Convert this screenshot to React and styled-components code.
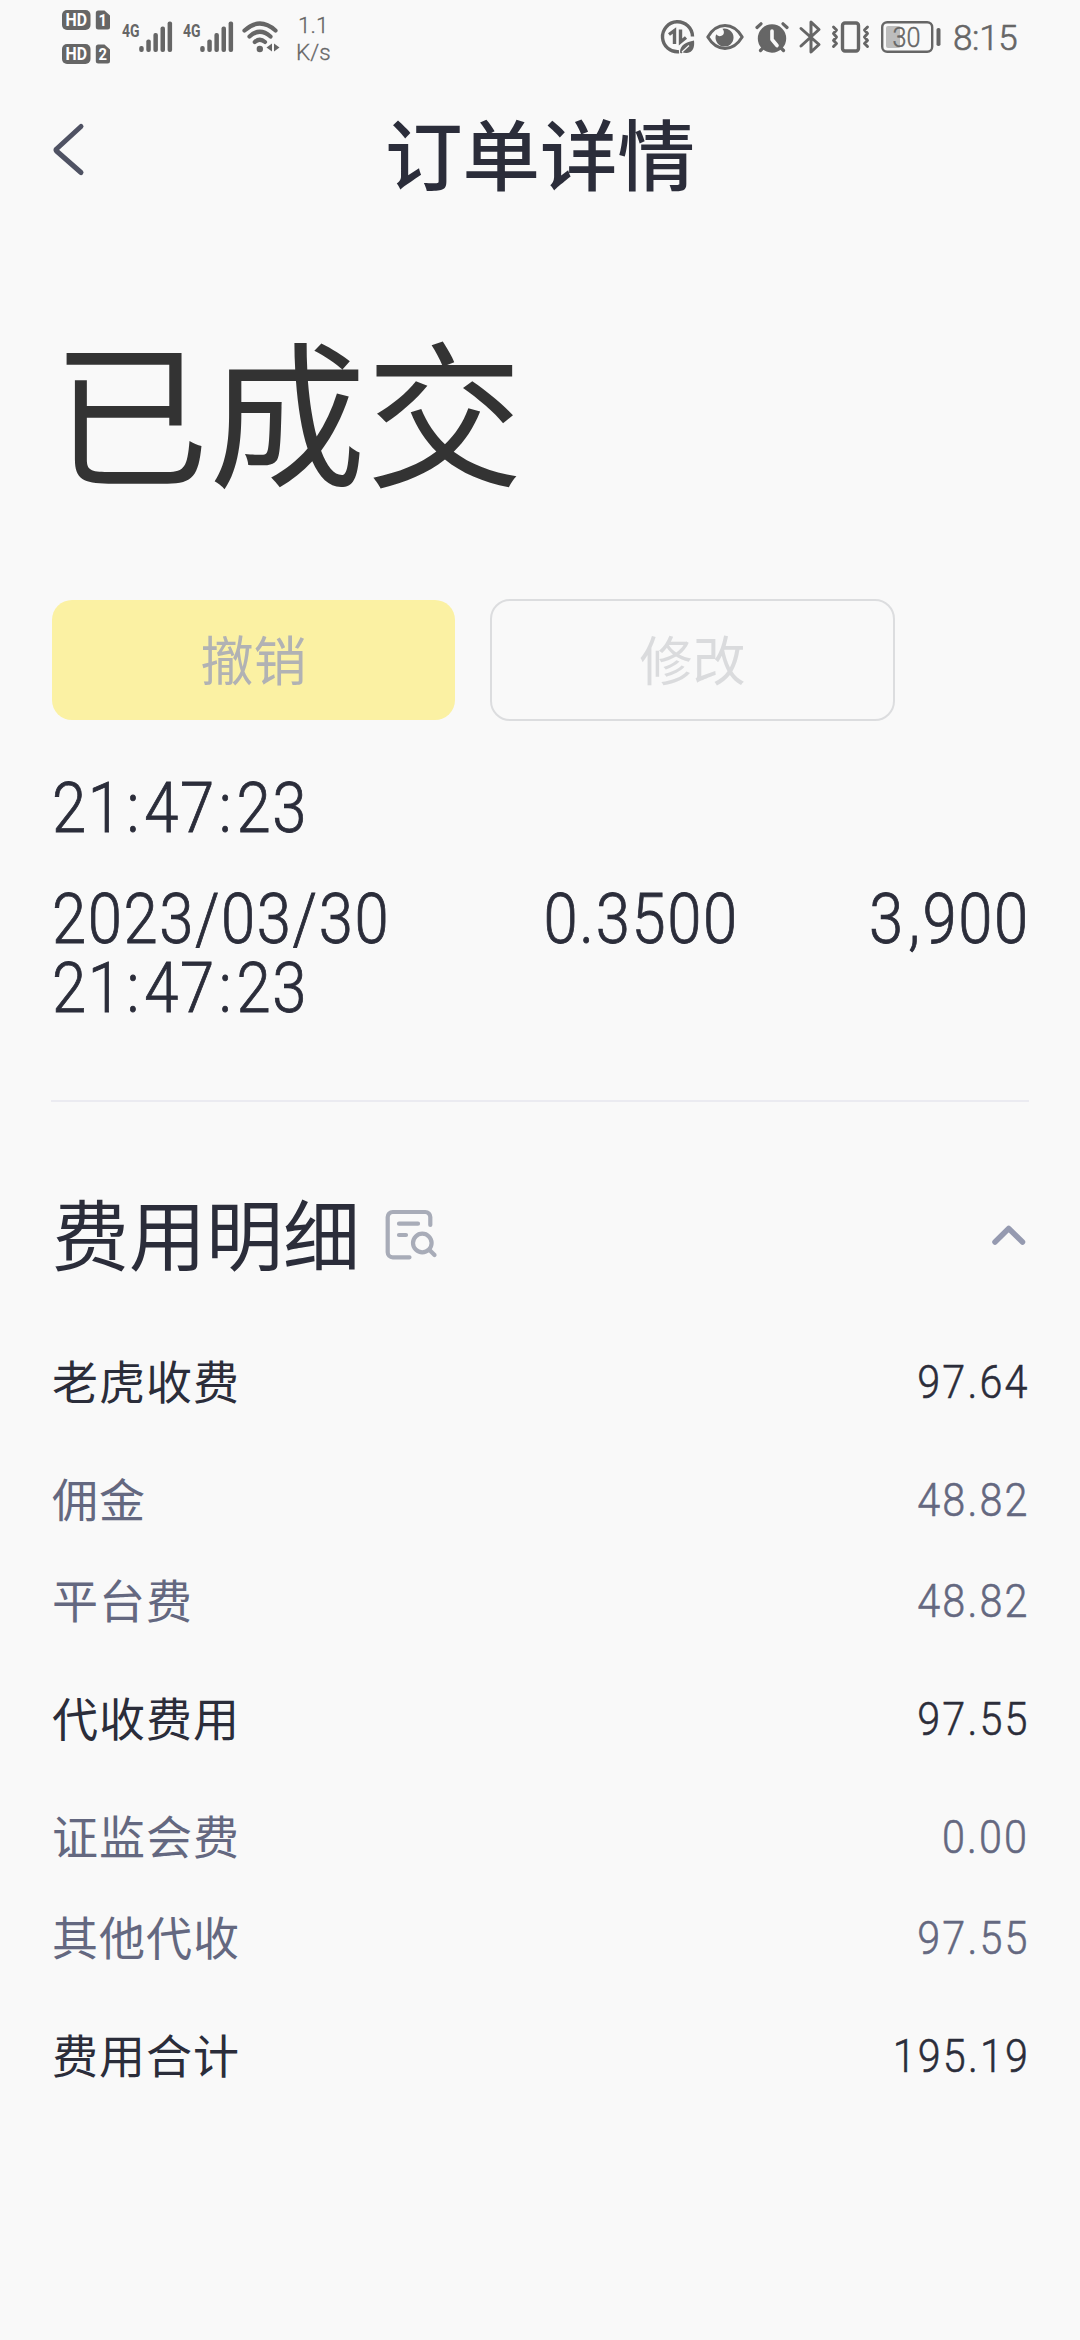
import React from 'react'
import styled, { createGlobalStyle } from 'styled-components';

const fees = [
    { label: '老虎收费', value: '97.64', main: true },
    { label: '佣金', value: '48.82' },
    { label: '平台费', value: '48.82' },
    { label: '代收费用', value: '97.55', main: true },
    { label: '证监会费', value: '0.00' },
    { label: '其他代收', value: '97.55' },
    { label: '费用合计', value: '195.19', main: true },
]

// colons and commas get some extra room around them
function Num({ children, size, spacing, origin }) {
    return (
        <NumStyled $size={size} $spacing={spacing} $origin={origin}>
            {children.split(/([:,])/).map((part, i) =>
                part === ':' || part === ',' ? <Sep key={i} $comma={part === ','}>{part}</Sep> : part
            )}
        </NumStyled>
    )
}

function HdBadge({ sim }) {
    return (
        <svg width="49" height="20" viewBox="0 0 49 20">
            <rect x="0" y="0" width="28.5" height="20" rx="5" fill="#666" />
            <text x="3.6" y="16" fontSize="17.5" fontWeight="700" fill="#fff" textLength="21.5" lengthAdjust="spacingAndGlyphs">HD</text>
            <path d="M36.3 .5h6.2l5.5 5V17a2.5 2.5 0 0 1-2.5 2.5h-9.2a2.5 2.5 0 0 1-2.5-2.5V3a2.5 2.5 0 0 1 2.5-2.5z" fill="#666" />
            <text x="36.5" y="16" fontSize="17" fontWeight="700" fill="#fff" textLength="8.5" lengthAdjust="spacingAndGlyphs">{sim}</text>
        </svg>
    )
}

function Signal() {
    const heights = [6, 12.5, 19, 25.5, 30.5]
    return (
        <svg width="50" height="32" viewBox="0 0 50 32">
            <text x="0" y="15.5" fontSize="19" fontWeight="700" fill="#666" textLength="17.5" lengthAdjust="spacingAndGlyphs">4G</text>
            {heights.map((h, i) => (
                <rect key={h} x={17.2 + i * 7.1} y={31 - h} width="4.5" height={h} rx="2" fill="#666" />
            ))}
        </svg>
    )
}

function WifiIcon() {
    return (
        <svg width="38" height="32" viewBox="0 0 38 32" fill="none" stroke="#666" strokeWidth="4.2" strokeLinecap="round">
            <path d="M2.5 9.5Q17.7-4.5 33.5 9.5" />
            <path d="M7.5 15.5Q17.7 6 28.5 15.5" />
            <path d="M12.8 21Q17.7 16.5 23 21" />
            <circle cx="17.8" cy="28" r="3.2" fill="#666" stroke="none" />
            <path d="M30 22.5v8l-5.5-4zM32 22.5v8l5.5-4z" fill="#666" stroke="none" />
        </svg>
    )
}

function DataSaverIcon() {
    return (
        <svg width="34" height="34" viewBox="0 0 34 34" fill="none">
            <path d="M18 31.7A15 15 0 1 1 31.5 16.5" stroke="#666" strokeWidth="3.4" />
            <path d="M8 14.5l5.5-4V24" stroke="#666" strokeWidth="3.4" />
            <path d="M19.5 9.5V22l5.5-4.5" stroke="#666" strokeWidth="3.4" />
            <path d="M33 20.5c.8 6.500-1 12-7 12.500-2 .2-3.500-.2-4.500-.8l-1.300 1.400-1.200-1.200C19 25 25 22 33 20.500z" fill="#666" />
            <path d="M21 32l7-6.500" stroke="#f9f9f9" strokeWidth="1.2" />
        </svg>
    )
}

function EyeIcon() {
    return (
        <svg width="38" height="26" viewBox="0 0 38 26">
            <path d="M1.8 13C11-2.200 27-2.200 36.200 13 27 28.200 11 28.200 1.800 13z" fill="none" stroke="#666" strokeWidth="3" strokeLinejoin="round" />
            <path d="M16.500 4.800c2.500 3 1.500 6.500-1.500 7.200-2.200.5-3.800-.5-4.800-1.800A9 9 0 1 0 16.500 4.800z" fill="#666" />
        </svg>
    )
}

function AlarmIcon() {
    return (
        <svg width="34" height="31" viewBox="0 0 34 31" stroke="#666" strokeLinecap="round">
            <circle cx="17" cy="16.5" r="13.2" fill="#666" strokeWidth="2" />
            <path d="M2 5.500L6 1.800M32 5.500L28 1.800M5.500 28.500l4-4M28.500 28.500l-4-4" strokeWidth="3.2" />
            <path d="M17 9v8.500l5 6" fill="none" stroke="#f9f9f9" strokeWidth="3.6" strokeLinejoin="round" />
        </svg>
    )
}

function BluetoothIcon() {
    return (
        <svg width="22" height="34" viewBox="0 0 22 34" fill="none" stroke="#666" strokeWidth="3" strokeLinejoin="round" strokeLinecap="round">
            <path d="M2 8.500L20 24.500 12 32V2l8 7.500L2 26" />
        </svg>
    )
}

function VibrateIcon() {
    return (
        <svg width="39" height="32" viewBox="0 0 39 32" fill="none" stroke="#666" strokeLinejoin="round" strokeLinecap="round">
            <rect x="11.5" y="2" width="16" height="28" rx="2.5" strokeWidth="3.4" />
            <path d="M2.500 6l3 3-3 3.500 3 3.500-3 3.500 3 3-3 3M36.500 6l-3 3 3 3.500-3 3.500 3 3.500-3 3 3 3" strokeWidth="2.9" />
        </svg>
    )
}

function BatteryIcon() {
    return (
        <svg width="60" height="32" viewBox="0 0 60 32">
            <rect x="5" y="5" width="14" height="22" rx="2" fill="#bdbdbd" />
            <rect x="1.2" y="1.2" width="50" height="29.6" rx="5" fill="none" stroke="#666" strokeWidth="2.4" />
            <rect x="55.5" y="7" width="4" height="18" rx="1.8" fill="#666" />
            <text x="11.5" y="25.5" fontSize="27" fontWeight="300" fill="#666" stroke="#666" strokeWidth=".4" textLength="28" lengthAdjust="spacingAndGlyphs">30</text>
        </svg>
    )
}

function App() {
    return (
        <>
            <GlobalStyle />
            <PageStyled>
                <StatusBar>
                    <HdStack>
                        <HdBadge sim="1" />
                        <HdBadge sim="2" />
                    </HdStack>
                    <StatusItem $left={11}><Signal /></StatusItem>
                    <StatusItem $left={11}><Signal /></StatusItem>
                    <StatusItem $left={9}><WifiIcon /></StatusItem>
                    <Speed>
                        <span>1.1</span>
                        <span>K/s</span>
                    </Speed>
                    <StatusRight>
                        <DataSaverIcon />
                        <StatusItem $left={11}><EyeIcon /></StatusItem>
                        <StatusItem $left={11}><AlarmIcon /></StatusItem>
                        <StatusItem $left={10}><BluetoothIcon /></StatusItem>
                        <StatusItem $left={10}><VibrateIcon /></StatusItem>
                        <StatusItem $left={11}><BatteryIcon /></StatusItem>
                        <Clock>8:15</Clock>
                    </StatusRight>
                </StatusBar>
                <Header>
                    <svg width="34" height="56" viewBox="0 0 34 56" fill="none" stroke="#4f5263" strokeWidth="5" strokeLinecap="round" strokeLinejoin="round">
                        <path d="M29 4.500L4.500 27a1.500 1.500 0 0 0 0 2L29 50.500" />
                    </svg>
                    <h1>订单详情</h1>
                </Header>
                <Content>
                    <OrderStatus>已成交</OrderStatus>
                    <Actions>
                        <ActionButton $primary>撤销</ActionButton>
                        <ActionButton>修改</ActionButton>
                    </Actions>
                    <TimeLine>
                        <Num size={70} spacing={1.8} origin="left">21:47:23</Num>
                    </TimeLine>
                    <TradeRow>
                        <div>
                            <Num size={70} spacing={1.8} origin="left">2023/03/30</Num>
                            <Num size={70} spacing={1.8} origin="left">21:47:23</Num>
                        </div>
                        <Num size={70} spacing={1.8} origin="right">0.3500</Num>
                        <Num size={70} spacing={1.8} origin="right">3,900</Num>
                    </TradeRow>
                    <Divider />
                    <FeeHeader>
                        <h2>费用明细</h2>
                        <svg width="53" height="52" viewBox="0 0 53 52" fill="none" stroke="#a8acb8" strokeWidth="4.2" strokeLinecap="round">
                            <path d="M45.300 16V8a5 5 0 0 0-5-5H7.700a5 5 0 0 0-5 5v35.300a5 5 0 0 0 5 5H24.500" />
                            <path d="M14 14.700h19M14 26h7" />
                            <circle cx="37.3" cy="34" r="9.3" />
                            <path d="M44.500 41l5 5" />
                        </svg>
                        <Caret width="36" height="24" viewBox="0 0 36 24" fill="none" stroke="#959ab0" strokeWidth="5.5" strokeLinecap="round" strokeLinejoin="round">
                            <path d="M4 19L17.700 5.500 31.500 19" />
                        </Caret>
                    </FeeHeader>
                    {fees.map(({ label, value, main }) => (
                        <FeeRow key={label} $main={main}>
                            <FeeLabel>{label}</FeeLabel>
                            <Num size={47} spacing={2.4} origin="right">{value}</Num>
                        </FeeRow>
                    ))}
                </Content>
            </PageStyled>
        </>
    )
}

const GlobalStyle = createGlobalStyle`
    * {
        box-sizing: border-box;
        margin: 0;
        padding: 0;
    }
    body {
        background: #f9f9f9;
    }
`;

const PageStyled = styled.div`
    width: 1080px;
    height: 2340px;
    overflow: hidden;
    background: #f9f9f9;
    color: #2b2d3a;
    font-family: Roboto, 'Noto Sans CJK SC', sans-serif;
    svg {
        display: block;
        flex-shrink: 0;
        overflow: visible;
    }
`;

const StatusBar = styled.div`
    display: flex;
    align-items: center;
    height: 74px;
    padding: 0 63px 0 62px;
    color: #666;
`;

const HdStack = styled.div`
    display: flex;
    flex-direction: column;
    gap: 14px;
`;

const StatusItem = styled.div`
    margin-left: ${({ $left }) => $left}px;
`;

const Speed = styled.div`
    display: flex;
    flex-direction: column;
    margin-left: 16px;
    padding-top: 3px;
    font-size: 22.5px;
    font-weight: 300;
    -webkit-text-stroke: .3px;
    line-height: 27px;
    text-align: center;
`;

const StatusRight = styled.div`
    display: flex;
    align-items: center;
    margin-left: auto;
`;

const Clock = styled.div`
    width: 64px;
    margin-left: 12px;
    padding-top: 3px;
    font-size: 35px;
    font-weight: 300;
    -webkit-text-stroke: .6px;
    line-height: 40px;
    letter-spacing: -.3px;
`;

const Header = styled.header`
    display: grid;
    grid-template-columns: 34px 1fr 34px;
    align-items: center;
    height: 140px;
    margin-top: 6px;
    padding: 0 52px;
    h1 {
        padding-top: 18px;
        font-size: 77.5px;
        font-weight: 500;
        line-height: 110px;
        text-align: center;
    }
`;

const Content = styled.main`
    padding: 90px 52px 0;
`;

const OrderStatus = styled.div`
    height: 190px;
    padding-top: 16px;
    font-size: 157px;
    line-height: 190px;
    color: #333;
`;

const Actions = styled.div`
    display: flex;
    align-items: center;
    gap: 35px;
    height: 122px;
    margin-top: 99px;
`;

const ActionButton = styled.button`
    width: ${({ $primary }) => ($primary ? 403 : 405)}px;
    height: ${({ $primary }) => ($primary ? 120 : 122)}px;
    padding-top: 6px;
    border: ${({ $primary }) => ($primary ? 'none' : '2px solid #dcdddf')};
    border-radius: 20px;
    background: ${({ $primary }) => ($primary ? '#fbf1a3' : 'transparent')};
    color: ${({ $primary }) => ($primary ? '#b1b2b4' : '#dadbdd')};
    font-family: inherit;
    font-size: 53px;
    line-height: 76px;
`;

const NumStyled = styled.span`
    display: block;
    width: max-content;
    margin-right: ${({ $origin }) => ($origin === 'right' ? '-1.5px' : 0)};
    font-size: ${({ $size }) => $size}px;
    font-weight: 300;
    -webkit-text-stroke: .012em;
    letter-spacing: ${({ $spacing }) => $spacing}px;
    white-space: nowrap;
    transform: scaleX(.88);
    transform-origin: ${({ $origin }) => $origin};
`;

const Sep = styled.span`
    padding: ${({ $comma }) => ($comma ? '0 1px 0 4px' : '0 3.5px')};
`;

const TimeLine = styled.div`
    margin-top: 52.5px;
    line-height: 69.5px;
`;

const TradeRow = styled.div`
    display: grid;
    grid-template-columns: 394px 291px 291px;
    justify-items: end;
    height: 215.5px;
    margin-top: 41.5px;
    line-height: 69.5px;
    > div {
        justify-self: start;
    }
`;

const Divider = styled.div`
    height: 2px;
    margin: 0 -1px;
    background: #ebebf1;
`;

const FeeHeader = styled.div`
    display: flex;
    align-items: center;
    height: 212px;
    padding-top: 53px;
    h2 {
        width: 333px;
        padding-top: 8px;
        font-size: 77px;
        font-weight: 400;
        line-height: 110px;
    }
`;

const Caret = styled.svg`
    margin-left: auto;
    margin-right: 1px;
`;

const FeeRow = styled.div`
    display: flex;
    align-items: center;
    justify-content: space-between;
    height: ${({ $main }) => ($main ? 135 : 101)}px;
    color: ${({ $main }) => ($main ? '#2b2d3a' : '#646880')};
`;

const FeeLabel = styled.span`
    padding-bottom: 5px;
    font-size: 46px;
    letter-spacing: 1px;
`;

export default App
